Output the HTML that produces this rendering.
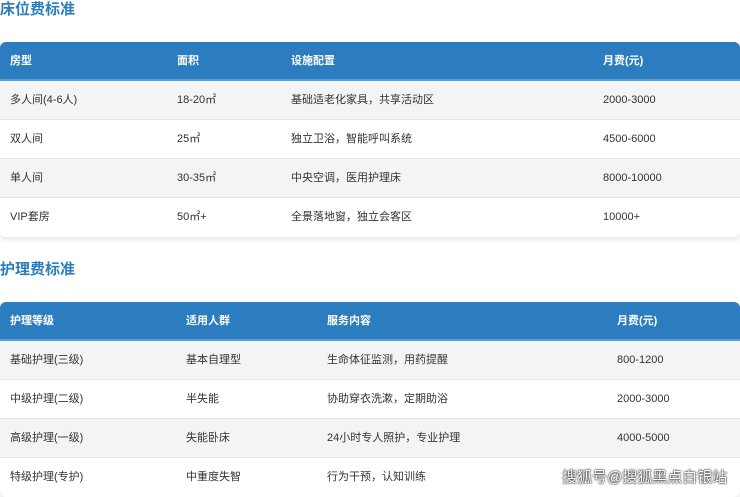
<!DOCTYPE html><html><head><meta charset="utf-8"><style>
body{margin:0;width:740px;height:494px;overflow:hidden;background:#fff;font-family:"Liberation Sans","Noto Sans CJK SC",sans-serif;position:relative}
h2{position:absolute;left:0;margin:0;font-size:15px;font-weight:bold;color:#2b7dbf;line-height:20px}
.t{position:absolute;left:0;width:740px;border-radius:6px;overflow:hidden;box-shadow:0 2px 6px rgba(0,0,0,.12)}
.r{height:39px;position:relative;font-size:11px;color:#333;border-bottom:1px solid #e6e6e6;box-sizing:border-box}
.r span{position:absolute;top:0;line-height:39px}
.h{background:#2b7dbf;color:#fff;font-weight:bold;border-bottom:2px solid #5aa0d6}
.g{background:#f4f4f4}
.w{position:absolute;left:562px;top:466px;font-size:15px;color:#fff;text-shadow:0 0 2px #000,0 0 1px #000}
</style></head><body>
<h2 style="top:0">床位费标准</h2>
<div class="t" style="top:42px">
<div class="r h"><span style="left:10px">房型</span><span style="left:177px">面积</span><span style="left:291px">设施配置</span><span style="left:603px">月费(元)</span></div>
<div class="r g"><span style="left:10px">多人间(4-6人)</span><span style="left:177px">18-20㎡</span><span style="left:291px">基础适老化家具，共享活动区</span><span style="left:603px">2000-3000</span></div>
<div class="r"><span style="left:10px">双人间</span><span style="left:177px">25㎡</span><span style="left:291px">独立卫浴，智能呼叫系统</span><span style="left:603px">4500-6000</span></div>
<div class="r g"><span style="left:10px">单人间</span><span style="left:177px">30-35㎡</span><span style="left:291px">中央空调，医用护理床</span><span style="left:603px">8000-10000</span></div>
<div class="r" style="border:0"><span style="left:10px">VIP套房</span><span style="left:177px">50㎡+</span><span style="left:291px">全景落地窗，独立会客区</span><span style="left:603px">10000+</span></div>
</div>
<h2 style="top:260px">护理费标准</h2>
<div class="t" style="top:302px">
<div class="r h"><span style="left:10px">护理等级</span><span style="left:186px">适用人群</span><span style="left:327px">服务内容</span><span style="left:617px">月费(元)</span></div>
<div class="r g"><span style="left:10px">基础护理(三级)</span><span style="left:186px">基本自理型</span><span style="left:327px">生命体征监测，用药提醒</span><span style="left:617px">800-1200</span></div>
<div class="r"><span style="left:10px">中级护理(二级)</span><span style="left:186px">半失能</span><span style="left:327px">协助穿衣洗漱，定期助浴</span><span style="left:617px">2000-3000</span></div>
<div class="r g"><span style="left:10px">高级护理(一级)</span><span style="left:186px">失能卧床</span><span style="left:327px">24小时专人照护，专业护理</span><span style="left:617px">4000-5000</span></div>
<div class="r" style="border:0"><span style="left:10px">特级护理(专护)</span><span style="left:186px">中重度失智</span><span style="left:327px">行为干预，认知训练</span></div>
</div>
<div class="w">搜狐号@搜狐黑点白银站</div>
</body></html>
